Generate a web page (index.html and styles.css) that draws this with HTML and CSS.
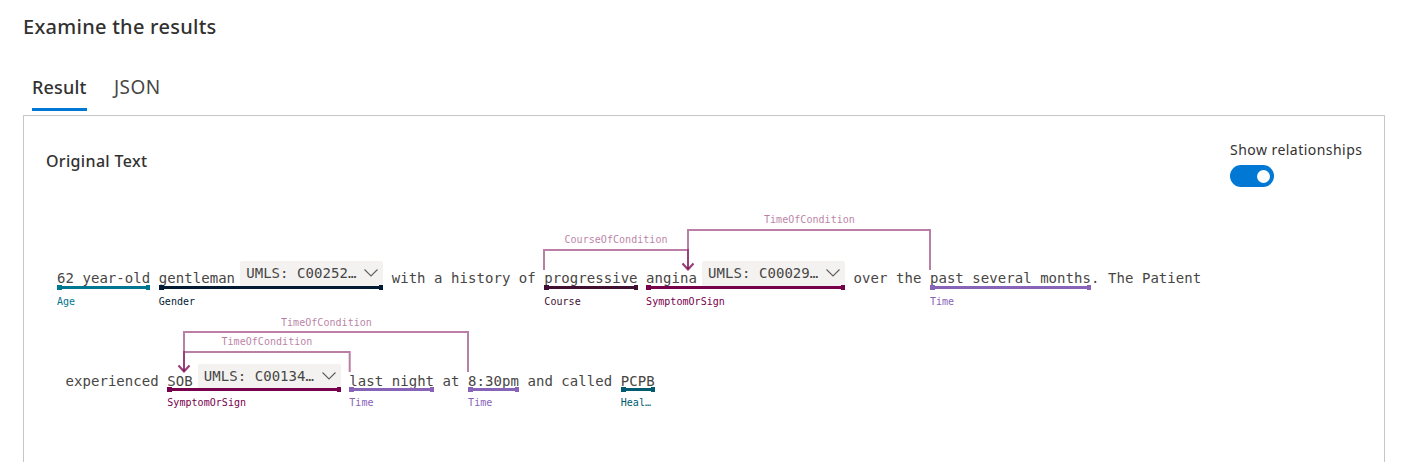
FILE: index.html
```html
<!DOCTYPE html>
<html lang="en">
<head>
<meta charset="utf-8">
<title>Examine the results</title>
<link rel="stylesheet" href="styles.css">
</head>
<body>
<main class="page">
  <h1 class="title">Examine the results</h1>
  <nav class="tabs">
    <a class="tab tab-active"><span>Result</span></a>
    <a class="tab tab-json"><span>JSON</span></a>
  </nav>
  <section class="panel">
    <header class="panel-head">
      <h2 class="subtitle">Original Text</h2>
      <div class="setting">
        <span class="setting-label">Show relationships</span>
        <div class="toggle"><span class="knob"></span></div>
      </div>
    </header>
    <div class="document">
      <div class="line">
        <div class="entity age"><div class="words">62 year-old</div><div class="bar"></div><div class="kind">Age</div></div>
        <div class="entity gender"><div class="words">gentleman<span class="chip">UMLS: C00252…<svg class="chevron" viewBox="0 0 14 8"><path d="M.5 .5 7 7 13.5 .5"/></svg></span></div><div class="bar"></div><div class="kind">Gender</div></div>
        <div class="words">with a history of</div>
        <div class="entity course"><div class="words">progressive</div><div class="bar"></div><div class="kind">Course</div></div>
        <div class="entity symptom"><div class="words">angina<span class="chip">UMLS: C00029…<svg class="chevron" viewBox="0 0 14 8"><path d="M.5 .5 7 7 13.5 .5"/></svg></span></div><div class="bar"></div><div class="kind">SymptomOrSign</div></div>
        <div class="words">over the</div>
        <div class="entity time"><div class="words">past several months</div><div class="bar"></div><div class="kind">Time</div></div>
        <div class="words attached">. The Patient</div>
      </div>
      <div class="line line-next">
        <div class="words">experienced</div>
        <div class="entity symptom"><div class="words">SOB<span class="chip">UMLS: C00134…<svg class="chevron" viewBox="0 0 14 8"><path d="M.5 .5 7 7 13.5 .5"/></svg></span></div><div class="bar"></div><div class="kind">SymptomOrSign</div></div>
        <div class="entity time"><div class="words">last night</div><div class="bar"></div><div class="kind">Time</div></div>
        <div class="words">at</div>
        <div class="entity time"><div class="words">8:30pm</div><div class="bar"></div><div class="kind">Time</div></div>
        <div class="words">and called</div>
        <div class="entity care"><div class="words">PCPB</div><div class="bar"></div><div class="kind">Heal…</div></div>
      </div>
      <svg class="relations" viewBox="24 201 1360 261">
        <path d="M544 270V250H688V269"/>
        <path d="M682.5 263.5 688 269.5 693.5 263.5"/>
        <path d="M930 270V230H688V269"/>
        <path d="M682.5 263.5 688 269.5 693.5 263.5"/>
        <path d="M468 372V332H184V371"/>
        <path d="M178.5 365.5 184 371.5 189.5 365.5"/>
        <path d="M349.7 372V352H184V371"/>
        <path d="M178.5 365.5 184 371.5 189.5 365.5"/>
        <text x="564.5" y="243">CourseOfCondition</text>
        <text x="764" y="223">TimeOfCondition</text>
        <text x="281" y="326">TimeOfCondition</text>
        <text x="221.5" y="345">TimeOfCondition</text>
      </svg>
    </div>
  </section>
</main>
</body>
</html>
```
FILE: styles.css
```css
* { box-sizing: border-box; }
body {
  margin: 0;
  height: 462px;
  overflow: hidden;
  background: #fff;
  color: #323130;
  font-family: "Noto Sans", "Open Sans", sans-serif;
}
.page { display: flex; flex-direction: column; height: 462px; padding: 13px 21px 0 23px; }
.title { margin: 0; font-size: 20px; line-height: 28px; font-weight: 500; letter-spacing: .27px; }
.tabs { display: flex; gap: 26px; height: 70px; margin-bottom: 4px; padding: 32px 0 0 9px; }
.tab { height: 38px; line-height: 28px; font-size: 18px; color: #484644; }
.tab-active { width: 55px; color: #323130; font-weight: 500; letter-spacing: .2px; border-bottom: 3px solid #0078d4; }
.tab-json { padding-left: 1px; font-size: 19px; letter-spacing: .4px; }
.panel { flex: none; height: 360px; border: 1px solid #c8c6c4; }
.panel-head { display: flex; justify-content: space-between; height: 85px; padding: 22px 22px 0; }
.subtitle { margin: 11px 0 0; font-size: 16px; line-height: 24px; font-weight: 500; letter-spacing: .33px; }
.setting { width: 132px; white-space: nowrap; }
.setting-label { display: block; padding-top: 1px; font-size: 14px; line-height: 22px; letter-spacing: .46px; }
.toggle { display: flex; justify-content: flex-end; align-items: center; width: 44px; height: 22px; margin-top: 4px; padding-right: 4px; border-radius: 11px; background: #0078d4; }
.knob { width: 13px; height: 13px; border-radius: 50%; background: #fff; }
.document {
  position: relative;
  padding: 60px 0 0 33px;
  color: #484644;
  font-family: "DejaVu Sans Mono", monospace;
  font-size: 14px;
  letter-spacing: .05px;
  white-space: nowrap;
}
.line { display: flex; gap: 8.5px; height: 102px; }
.line-next { padding-left: 8.5px; }
.words { display: flex; height: 25px; line-height: 35px; }
.line-next .words { line-height: 37px; }
.attached { margin-left: -8.5px; }
.chip { display: flex; align-items: center; justify-content: space-between; width: 143px; height: 25px; margin-left: 5.1px; padding: 0 5px 1px 6px; border-radius: 2px 2px 0 0; background: #f3f2f1; line-height: 22px; }
.line-next .chip { height: 24px; margin-top: 1px; padding-bottom: 0; }
.chevron { width: 14px; height: 8px; margin-bottom: 1px; fill: none; stroke: #605e5c; stroke-width: 1.1; }
.bar {
  position: relative;
  height: 3px;
  background: currentColor;
}
.bar::before, .bar::after { content: ""; position: absolute; top: -1px; width: 5px; height: 5px; background: currentColor; }
.bar::before { left: 0; }
.bar::after { right: 0; width: 4px; }
.kind { width: 0; margin-top: 5px; font-size: 10px; line-height: 16px; letter-spacing: .04px; }
.line-next .kind { margin-top: 4px; }
.entity .words { color: #484644; }
.age { color: #007791; }
.gender { color: #001b33; }
.course { color: #401032; }
.symptom { color: #77004d; }
.time { color: #8764b8; }
.care { color: #005b70; }
.relations { position: absolute; left: 0; top: 0; width: 1360px; height: 261px; }
.relations path { fill: none; stroke: #77004d; stroke-width: 2; opacity: .5; }
.relations text { fill: #77004d; opacity: .5; font-size: 10px; letter-spacing: .04px; }
```
